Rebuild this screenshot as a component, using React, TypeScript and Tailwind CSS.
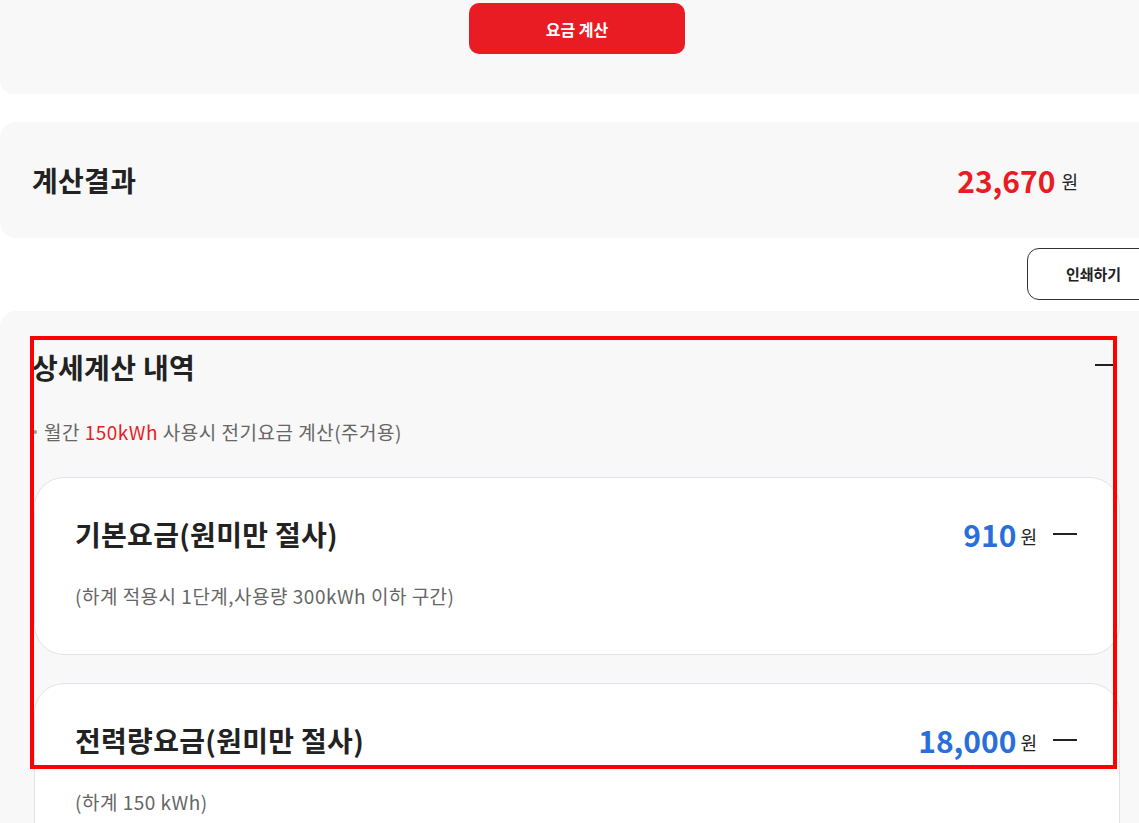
import React from 'react';

const font = { fontFamily: '"Noto Sans CJK KR", "Noto Sans", sans-serif' };

const Minus = ({ className = '' }: { className?: string }) => (
    <span className={`block h-[2px] bg-[#222] ${className}`} />
);

const FeeCard = ({ title, amount, note }: { title: string; amount: string; note: string }) => (
    <div className="bg-white border border-[#e2e2ea] rounded-[30px] pl-[40px] pr-[42px] pt-[36px] pb-[44px]">
        <div className="flex items-center justify-between h-[40px]">
            <h4 className="text-[28px] leading-[40px] font-bold text-[#222] tracking-[0.3px]">{title}</h4>
            <div className="flex items-center">
                <span className="text-[30px] font-bold text-[#2a6edb] leading-none">{amount}</span>
                <span className="text-[18px] text-[#222] ml-[4px] mt-[4px]">원</span>
                <Minus className="w-[24px] ml-[16px]" />
            </div>
        </div>
        <p className="mt-[28px] text-[19px] leading-[28px] tracking-[0.5px] text-[#666]">{note}</p>
    </div>
);

const App = () => {
    return (
        <div className="w-[1139px] h-[823px] overflow-hidden bg-white relative" style={font}>
            <div className="w-[1160px]">
                {/* Calculate button area */}
                <div className="bg-[#f8f8f8] rounded-b-[14px] h-[94px] pt-[3px]">
                    <div className="w-[1154px] flex justify-center">
                        <button className="w-[216px] h-[51px] rounded-[10px] bg-[#e91c24] text-white text-[16px] font-bold">요금 계산</button>
                    </div>
                </div>

                {/* Result */}
                <div className="mt-[28px] bg-[#f8f8f8] rounded-[16px] h-[116px] flex items-center justify-between pl-[32px] pr-[82px]">
                    <h3 className="text-[28px] font-bold text-[#222] tracking-[0.3px]">계산결과</h3>
                    <div className="flex items-center">
                        <span className="text-[30px] font-bold text-[#e91c24] leading-none">23,670</span>
                        <span className="text-[18px] text-[#222] ml-[6px] mt-[2px]">원</span>
                    </div>
                </div>

                <div className="flex justify-end mt-[10px]">
                    <button className="w-[133px] h-[52px] border border-[#333] rounded-[12px] bg-white text-[15px] font-bold text-[#222]">인쇄하기</button>
                </div>

                {/* Detail */}
                <div className="mt-[11px] bg-[#f8f8f8] rounded-tl-[16px] px-[34px] pt-[36px] pb-[40px] w-[1154px]">
                    <div className="flex items-center justify-between h-[40px]">
                        <h3 className="text-[28px] leading-[40px] font-bold text-[#222] tracking-[0.3px] -ml-[2px]">상세계산 내역</h3>
                        <Minus className="w-[22px] mr-[3px] -mt-[4px]" />
                    </div>
                    <p className="mt-[31px] flex items-center text-[19px] leading-[28px] tracking-[0.5px] text-[#666]">
                        <span className="w-[4px] h-[4px] rounded-full bg-[#999] mr-[7px] -ml-[1px]" />
                        월간&nbsp;<span className="text-[#e91c24]">150kWh</span>&nbsp;사용시 전기요금 계산(주거용)
                    </p>
                    <div className="mt-[31px] flex flex-col gap-[28px]">
                        <FeeCard title="기본요금(원미만 절사)" amount="910" note="(하계 적용시 1단계,사용량 300kWh 이하 구간)" />
                        <FeeCard title="전력량요금(원미만 절사)" amount="18,000" note="(하계 150 kWh)" />
                    </div>
                </div>
            </div>

            {/* highlight box */}
            <div className="absolute left-[30px] top-[336px] w-[1087px] h-[433px] border-[4px] border-[#ff0000] pointer-events-none" />
        </div>
    );
};

export default App;
